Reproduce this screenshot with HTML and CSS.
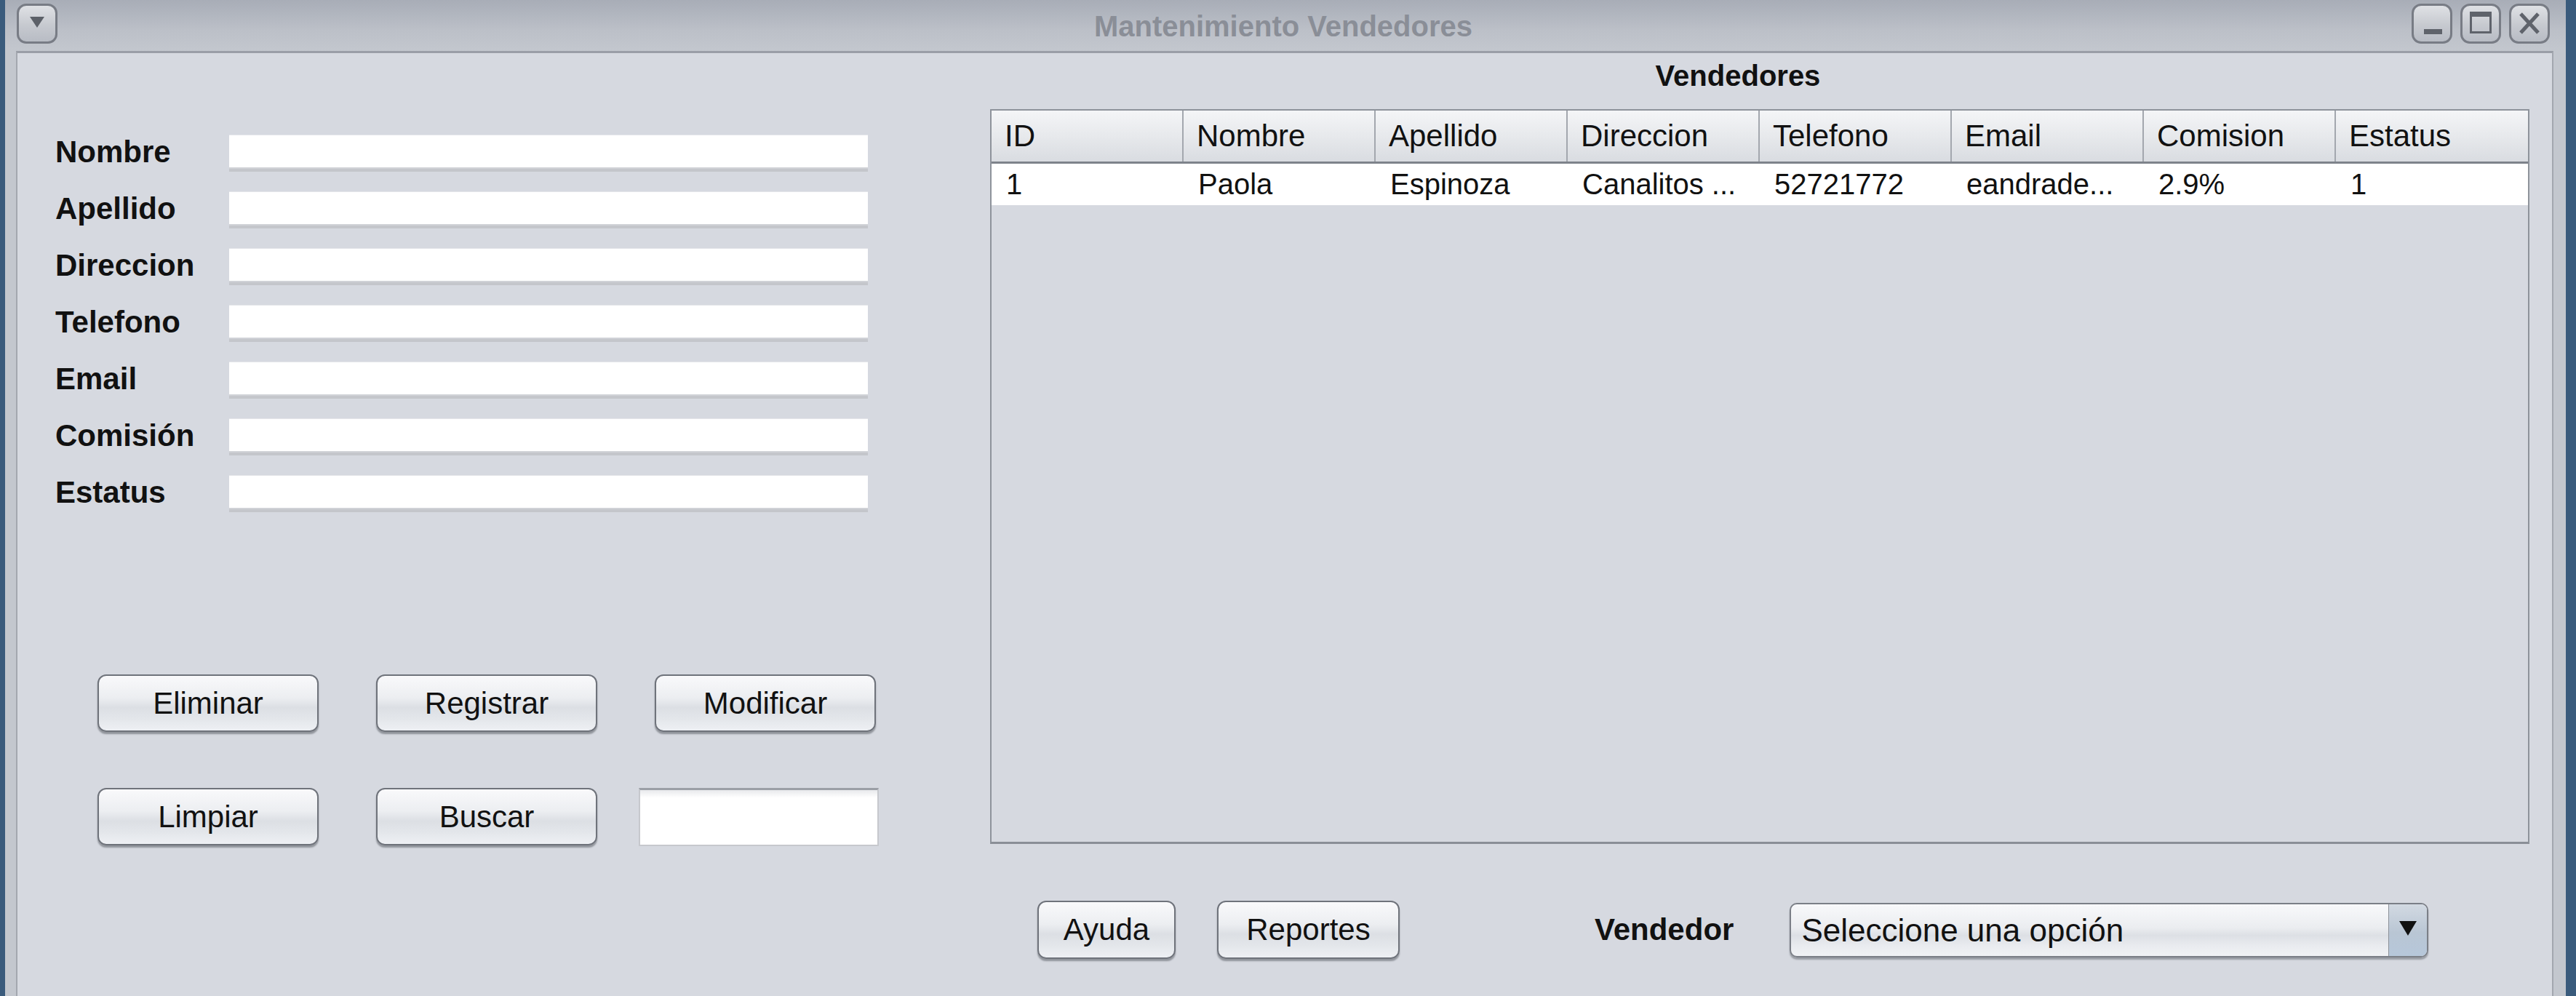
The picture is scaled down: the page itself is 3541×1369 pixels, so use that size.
FILE: index.html
```html
<!DOCTYPE html>
<html lang="es">
<head>
<meta charset="utf-8">
<title>Mantenimiento Vendedores</title>
<link rel="stylesheet" href="styles.css">
</head>
<body>
<div class="window">
  <div class="titlebar">
    <div class="tb-left">
      <div class="tb-btn">
        <svg width="22" height="18" viewBox="0 0 22 18"><polygon points="1,2 21,2 11,17" fill="#5c6068"/></svg>
      </div>
    </div>
    <div class="title">Mantenimiento Vendedores</div>
    <div class="tb-group">
      <div class="tb-btn">
        <svg width="50" height="50" viewBox="0 0 50 50"><rect x="14" y="32" width="25" height="7" fill="#5f636b"/></svg>
      </div>
      <div class="tb-btn">
        <svg width="50" height="50" viewBox="0 0 50 50"><rect x="11.5" y="9.5" width="27" height="27" fill="none" stroke="#5f636b" stroke-width="3"/><rect x="10" y="8" width="30" height="7" fill="#5f636b"/></svg>
      </div>
      <div class="tb-btn">
        <svg width="50" height="50" viewBox="0 0 50 50"><path d="M13 11 L37 37 M37 11 L13 37" stroke="#5f636b" stroke-width="5" fill="none"/></svg>
      </div>
    </div>
  </div>

  <div class="panel">
    <div class="left">
      <div class="form">
        <div class="lbl">Nombre</div><div class="field"></div>
        <div class="lbl">Apellido</div><div class="field"></div>
        <div class="lbl">Direccion</div><div class="field"></div>
        <div class="lbl">Telefono</div><div class="field"></div>
        <div class="lbl">Email</div><div class="field"></div>
        <div class="lbl">Comisión</div><div class="field"></div>
        <div class="lbl">Estatus</div><div class="field"></div>
      </div>
      <div class="actions">
        <div class="btn">Eliminar</div>
        <div class="btn">Registrar</div>
        <div class="btn">Modificar</div>
        <div class="btn">Limpiar</div>
        <div class="btn">Buscar</div>
        <div class="search"></div>
      </div>
    </div>

    <div class="right">
      <div class="heading">Vendedores</div>
      <div class="table">
        <div class="thead">
          <div class="th">ID</div>
          <div class="th">Nombre</div>
          <div class="th">Apellido</div>
          <div class="th">Direccion</div>
          <div class="th">Telefono</div>
          <div class="th">Email</div>
          <div class="th">Comision</div>
          <div class="th">Estatus</div>
        </div>
        <div class="tr">
          <div class="td">1</div>
          <div class="td">Paola</div>
          <div class="td">Espinoza</div>
          <div class="td">Canalitos ...</div>
          <div class="td">52721772</div>
          <div class="td">eandrade...</div>
          <div class="td">2.9%</div>
          <div class="td">1</div>
        </div>
      </div>
      <div class="bottom">
        <div class="btn btn-ayuda">Ayuda</div>
        <div class="btn btn-reportes">Reportes</div>
        <div class="lbl-vend">Vendedor</div>
        <div class="combo">
          <div class="combo-text">Seleccione una opción</div>
          <div class="combo-arrow">
            <svg width="26" height="22" viewBox="0 0 26 22"><polygon points="1,1 25,1 13,21" fill="#111"/></svg>
          </div>
        </div>
      </div>
    </div>
  </div>
</div>
</body>
</html>
```

FILE: styles.css
```css
html, body {
  margin: 0;
  padding: 0;
}
body {
  width: 3541px;
  height: 1369px;
  overflow: hidden;
  background: #3a5b7c;
  font-family: "Liberation Sans", Arial, sans-serif;
  color: #111;
}
.window {
  margin-left: 7px;
  width: 3520px;
  height: 1369px;
  background: #c3c7ce;
  display: flex;
  flex-direction: column;
}
.titlebar {
  height: 70px;
  box-sizing: border-box;
  padding: 5px 22px 0 16px;
  display: grid;
  grid-template-columns: 1fr auto 1fr;
  align-items: start;
  background: linear-gradient(#a8adb7, #bcc0c8 60%, #c3c7ce);
}
.tb-left {
  justify-self: start;
}
.tb-group {
  justify-self: end;
  display: flex;
  gap: 11px;
}
.tb-btn {
  width: 56px;
  height: 55px;
  box-sizing: border-box;
  border: 3px solid #787c85;
  border-radius: 13px;
  background: linear-gradient(#dfe1e5, #c6c9cf 55%, #b8bcc4);
  display: flex;
  align-items: center;
  justify-content: center;
}
.tb-left .tb-btn svg {
  margin-top: -6px;
}
.title {
  font-weight: bold;
  font-size: 40px;
  line-height: 62px;
  color: #8a8e97;
  white-space: nowrap;
}
.panel {
  flex: 1;
  margin: 0 17px 0 15px;
  border-top: 3px solid #9a9ea7;
  border-left: 2px solid #a3a7af;
  border-right: 2px solid #a3a7af;
  background: #d6d9e0;
  display: grid;
  grid-template-columns: 1337px 2116px;
  align-items: start;
}

/* left form */
.form {
  display: grid;
  grid-template-columns: 239px 878px;
  grid-auto-rows: 78px;
  padding: 112px 0 0 52px;
}
.lbl {
  font-weight: bold;
  font-size: 42px;
  line-height: 47px;
  color: #111;
}
.field {
  height: 45px;
  box-sizing: border-box;
  background: #fff;
  border-top: 1px solid #e4e5e9;
  box-shadow: 0 2px 0 #d0d2d7, 0 6px 0 #c4c6cb;
}
.actions {
  display: grid;
  grid-template-columns: repeat(3, 304px);
  column-gap: 79px;
  row-gap: 77px;
  padding: 196px 0 0 110px;
}
.btn {
  height: 79px;
  box-sizing: border-box;
  border: 2px solid #6f737b;
  border-radius: 12px;
  background: linear-gradient(#f9f9fb, #eceef1 40%, #dcdfe4 58%, #e4e7eb 80%, #eef0f4);
  box-shadow: 0 3px 2px rgba(60, 64, 72, 0.45);
  display: flex;
  align-items: center;
  justify-content: center;
  font-size: 42px;
  color: #111;
}
.search {
  margin-left: -22px;
  width: 330px;
  height: 80px;
  box-sizing: border-box;
  background: linear-gradient(#e8e9ec, #ffffff 14%);
  border: 2px solid #c6c8cd;
  border-top: 3px solid #9b9fa6;
}

/* right side */
.heading {
  margin-top: 9px;
  padding-right: 60px;
  text-align: center;
  font-weight: bold;
  font-size: 40px;
  line-height: 44px;
}
.table {
  margin-top: 24px;
  height: 1010px;
  box-sizing: border-box;
  border: 2px solid #8e939b;
  border-bottom: 3px solid #8a8f97;
  background: #d6d9e0;
}
.thead {
  display: grid;
  grid-template-columns: repeat(8, 1fr);
  height: 73px;
  box-sizing: border-box;
  border-bottom: 3px solid #7e838b;
  background: linear-gradient(#f4f5f7, #e7e9ec 50%, #d9dce1);
}
.th {
  font-size: 42px;
  line-height: 70px;
  padding-left: 18px;
  border-right: 2px solid #a3a7ae;
  white-space: nowrap;
  overflow: hidden;
}
.th:last-child {
  border-right: none;
}
.tr {
  display: grid;
  grid-template-columns: repeat(8, 1fr);
  height: 57px;
  background: #fff;
}
.td {
  font-size: 40px;
  line-height: 57px;
  padding-left: 20px;
  white-space: nowrap;
  overflow: hidden;
}
.bottom {
  margin-top: 78px;
  padding-left: 65px;
  display: flex;
  align-items: center;
}
.btn-ayuda {
  width: 190px;
  height: 80px;
}
.btn-reportes {
  width: 251px;
  height: 80px;
  margin-left: 57px;
}
.lbl-vend {
  margin-left: 268px;
  font-weight: bold;
  font-size: 42px;
}
.combo {
  margin-left: 77px;
  width: 878px;
  height: 75px;
  box-sizing: border-box;
  border: 2px solid #7b7f87;
  border-radius: 10px;
  overflow: hidden;
  display: flex;
  background: linear-gradient(#f8f9fb, #ebedf0 45%, #dde0e5 60%, #e9ebef 80%, #f0f2f5);
  box-shadow: 0 3px 2px rgba(60, 64, 72, 0.4);
}
.combo-text {
  flex: 1;
  font-size: 44px;
  line-height: 71px;
  padding-left: 14px;
  white-space: nowrap;
}
.combo-arrow {
  width: 53px;
  box-sizing: border-box;
  border-left: 1px solid #8b9098;
  background: linear-gradient(#d2d9e2, #b9c6d4 55%, #b6c7da);
  display: flex;
  justify-content: center;
  padding-top: 22px;
}
```
